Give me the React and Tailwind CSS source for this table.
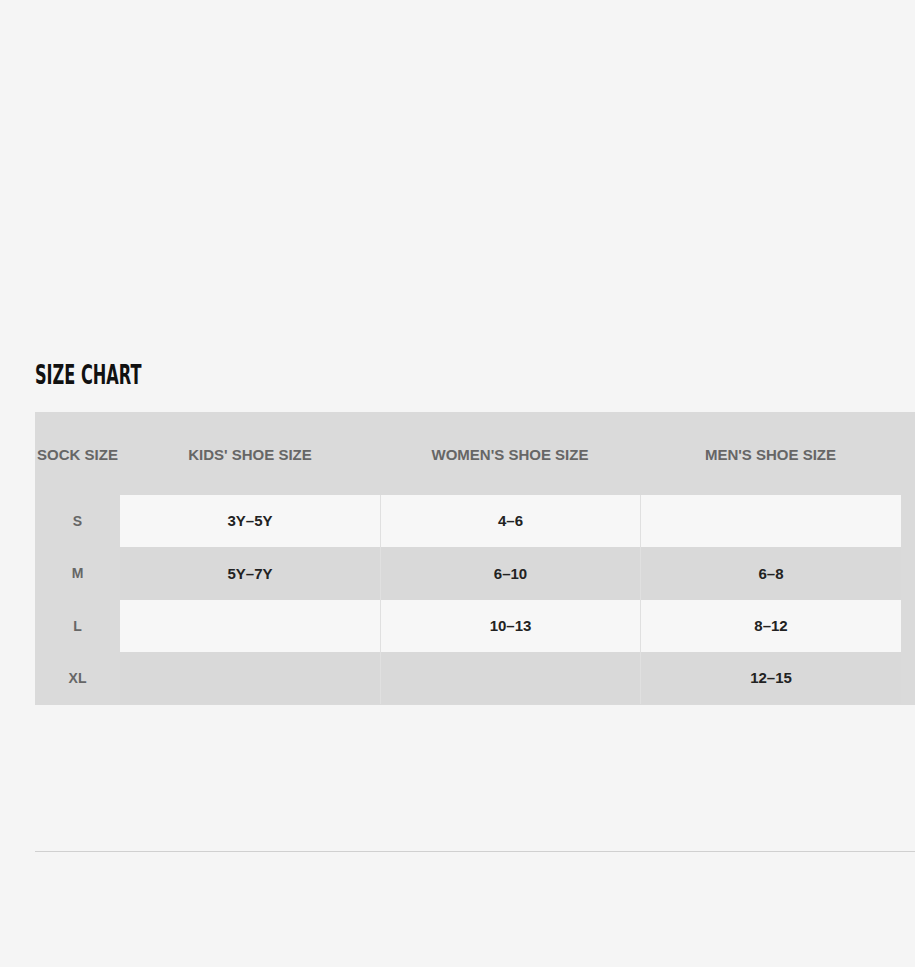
export default function App() {
  const rows = [
    { sock: 'S', kids: '3Y–5Y', women: '4–6', men: '', light: true },
    { sock: 'M', kids: '5Y–7Y', women: '6–10', men: '6–8', light: false },
    { sock: 'L', kids: '', women: '10–13', men: '8–12', light: true },
    { sock: 'XL', kids: '', women: '', men: '12–15', light: false },
  ];

  return (
    <div className="min-h-screen bg-[#f5f5f5] pl-[35px] pt-[360px] overflow-hidden" style={{ fontFamily: '"Liberation Sans", Arial, sans-serif' }}>
      <h2
        className="inline-block origin-left scale-x-[0.69] text-[26px] leading-[30px] font-bold text-[#111]"
        style={{ fontFamily: '"Liberation Sans Narrow", "DejaVu Sans Condensed", sans-serif' }}
      >
        SIZE CHART
      </h2>

      <div className="mt-[21px] w-[880px] bg-[#dadada] pr-[14px] pb-px">
        {/* header */}
        <div className="flex h-[83px] items-center pt-[4px] text-[15px] font-bold text-[#666]">
          <div className="w-[85px] text-center">SOCK SIZE</div>
          <div className="w-[260px] text-center">KIDS' SHOE SIZE</div>
          <div className="w-[260px] text-center">WOMEN'S SHOE SIZE</div>
          <div className="w-[261px] text-center">MEN'S SHOE SIZE</div>
        </div>

        {rows.map((r, i) => (
          <div key={r.sock} className={`flex text-[15px] font-bold ${i === 1 ? 'h-[53px]' : 'h-[52px]'}`}>
            <div className="flex w-[85px] items-center justify-center text-[14px] text-[#666]">{r.sock}</div>
            {[r.kids, r.women, r.men].map((v, j) => (
              <div
                key={j}
                className={`flex items-center justify-center pt-px text-[#222] ${j === 2 ? 'w-[261px]' : 'w-[260px]'} ${j > 0 ? 'border-l border-[#e0e0e0]' : ''} ${r.light ? 'bg-[#f7f7f7]' : 'bg-[#d9d9d9]'}`}
              >
                {v}
              </div>
            ))}
          </div>
        ))}
      </div>

      <div className="mt-[146px] h-px w-[880px] bg-[#d0d0d0]" />
    </div>
  );
}
